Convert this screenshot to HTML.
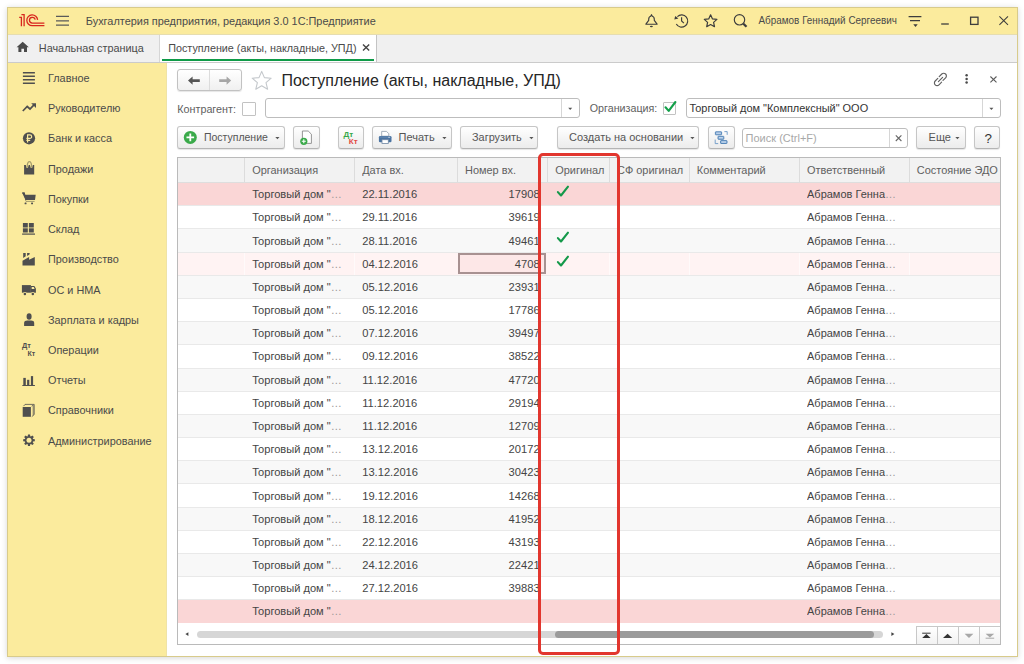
<!DOCTYPE html>
<html><head><meta charset="utf-8">
<style>
*{box-sizing:border-box;margin:0;padding:0}
html,body{width:1024px;height:664px;overflow:hidden;background:#fff;font-family:"Liberation Sans",sans-serif;color:#4d4d4d;position:relative}
.a{position:absolute}
.t{position:absolute;white-space:nowrap;line-height:1;transform-origin:left center}
</style></head><body>
<div class="a" style="left:7px;top:7px;width:1011px;height:650px;border:1px solid #d8cb8b;box-shadow:0 1px 6px rgba(0,0,0,.16);background:#fff"></div><div class="a" style="left:8px;top:8px;width:1009px;height:26px;background:#fbeb9d"></div><div class="a" style="left:8px;top:34px;width:1009px;height:29px;background:#f0f0f0;border-bottom:1px solid #cbcbcb"></div><div class="a" style="left:8px;top:34px;width:1009px;height:1px;background:#e6ddb0"></div><div class="a" style="left:8px;top:63px;width:158px;height:593px;background:#fbeb9d"></div><div class="a" style="left:166px;top:63px;width:1px;height:593px;background:#efe3a6"></div><svg class="a" style="left:15px;top:10px;" width="35" height="20" viewBox="15 10 35 20"><g fill="none" stroke="#d8261e" stroke-width="1.3" stroke-linecap="butt"><path d="M19.2 17.4H21.4V26.3M21.4 14.6H24.1V26.3"/><path d="M37.6 19.9A5.4 5.4 0 1 0 32.3 25.7H44.4"/><path d="M35.2 19.7A2.9 2.9 0 1 0 32.3 23.1H44.4"/></g></svg><svg class="a" style="left:54px;top:12px;" width="17" height="17" viewBox="54 12 17 17"><g stroke="#5a5a5a" stroke-width="1.3"><path d="M56 16.4H69M56 20.8H69M56 25.2H69"/></g></svg><div class="t" style="left:85.80px;top:16px;font-size:10.92px;color:#4a4a4a;transform:scale(1.0,1.06);transform-origin:0 9px;">Бухгалтерия предприятия, редакция 3.0 1С:Предприятие</div><svg class="a" style="left:642px;top:11px;" width="20" height="20" viewBox="642 11 20 20"><path d="M651.5 14.7L652.3 16.3C653.7 16.6 654.3 17.8 654.3 19.5V20.4L657.1 24.2H645.9L648.7 20.4V19.5C648.7 17.8 649.3 16.6 650.7 16.3z" fill="none" stroke="#3d3d3d" stroke-width="1.15" stroke-linejoin="round"/><ellipse cx="651.4" cy="26.5" rx="1.5" ry=".65" fill="#3d3d3d"/></svg><svg class="a" style="left:672px;top:11px;" width="20" height="20" viewBox="672 11 20 20"><g fill="none" stroke="#3d3d3d" stroke-width="1.15"><path d="M676.3 24A6.1 6.1 0 1 0 677.4 16.6"/><path d="M681.6 17.3V20.9L683.9 23.1"/></g><path d="M674.3 19.6L675.2 15.9L678.4 18.6z" fill="#3d3d3d"/></svg><svg class="a" style="left:702px;top:11px;" width="18" height="18" viewBox="702 11 18 18"><path fill="none" stroke="#3d3d3d" stroke-width="1.2" stroke-linejoin="round" d="M710.6 14.8l1.9 4.1 4.4.5-3.3 3 .9 4.3-3.9-2.2-3.9 2.2.9-4.3-3.3-3 4.4-.5z"/></svg><svg class="a" style="left:730px;top:11px;" width="20" height="20" viewBox="730 11 20 20"><circle cx="739.5" cy="19.8" r="5.2" fill="none" stroke="#3d3d3d" stroke-width="1.15"/><path d="M743.4 23.7L746.5 26.8" stroke="#3d3d3d" stroke-width="2.3"/></svg><div class="t" style="left:758.50px;top:16px;font-size:9.91px;color:#4a4a4a;transform:scale(1.0,1.02);transform-origin:0 8px;">Абрамов Геннадий Сергеевич</div><svg class="a" style="left:905px;top:12px;" width="20" height="18" viewBox="905 12 20 18"><g stroke="#3d3d3d" stroke-width="1.2"><path d="M908.6 16.6H921.4M910 20.6H920"/></g><path d="M913.3 24.3h4.4l-2.2 2.6z" fill="#3d3d3d"/></svg><svg class="a" style="left:938px;top:20px;" width="14" height="8" viewBox="938 20 14 8"><path d="M941.2 24H948.8" stroke="#3d3d3d" stroke-width="1.3"/></svg><svg class="a" style="left:966px;top:12px;" width="16" height="16" viewBox="966 12 16 16"><rect x="970.6" y="17.2" width="7.4" height="7.2" fill="none" stroke="#3d3d3d" stroke-width="1.3"/></svg><svg class="a" style="left:996px;top:13px;" width="16" height="15" viewBox="996 13 16 15"><path d="M999.4 16.4L1008 24.8M1008 16.4L999.4 24.8" stroke="#3d3d3d" stroke-width="1.05"/></svg><svg class="a" style="left:14px;top:39px;" width="18" height="16" viewBox="14 39 18 16"><path d="M22.7 41.8L16.6 47.2H18.4V52H21.4V48.8H24V52H27V47.2H28.8z" fill="#4a4a4a"/></svg><div class="t" style="left:38.80px;top:43px;font-size:10.86px;color:#4a4a4a;transform:scale(1.0,1.06);transform-origin:0 9px;">Начальная страница</div><div class="a" style="left:159px;top:35px;width:218px;height:27px;background:#fff;border-left:1px solid #d6d6d6;border-right:1px solid #c4c4c4"></div><div class="a" style="left:161.5px;top:59px;width:212.5px;height:1.6px;background:#0f9b48"></div><div class="t" style="left:168.20px;top:43px;font-size:10.79px;color:#4a4a4a;transform:scale(1.0,1.06);transform-origin:0 9px;">Поступление (акты, накладные, УПД)</div><svg class="a" style="left:360px;top:42px;" width="12" height="11" viewBox="360 42 12 11"><path d="M363 44.6L369.2 50.6M369.2 44.6L363 50.6" stroke="#444" stroke-width="1.4"/></svg><div class="t" style="left:48.00px;top:73px;font-size:10.87px;color:#4a4a4a;transform:scale(1.0,1.06);transform-origin:0 9px;">Главное</div><div class="t" style="left:48.00px;top:103px;font-size:10.87px;color:#4a4a4a;transform:scale(1.0,1.06);transform-origin:0 9px;">Руководителю</div><div class="t" style="left:48.00px;top:133px;font-size:10.87px;color:#4a4a4a;transform:scale(1.0,1.06);transform-origin:0 9px;">Банк и касса</div><div class="t" style="left:48.00px;top:164px;font-size:10.87px;color:#4a4a4a;transform:scale(1.0,1.06);transform-origin:0 9px;">Продажи</div><div class="t" style="left:48.00px;top:194px;font-size:10.87px;color:#4a4a4a;transform:scale(1.0,1.06);transform-origin:0 9px;">Покупки</div><div class="t" style="left:48.00px;top:224px;font-size:10.87px;color:#4a4a4a;transform:scale(1.0,1.06);transform-origin:0 9px;">Склад</div><div class="t" style="left:48.00px;top:254px;font-size:10.87px;color:#4a4a4a;transform:scale(1.0,1.06);transform-origin:0 9px;">Производство</div><div class="t" style="left:48.00px;top:285px;font-size:10.87px;color:#4a4a4a;transform:scale(1.0,1.06);transform-origin:0 9px;">ОС и НМА</div><div class="t" style="left:48.00px;top:315px;font-size:10.87px;color:#4a4a4a;transform:scale(1.0,1.06);transform-origin:0 9px;">Зарплата и кадры</div><div class="t" style="left:48.00px;top:345px;font-size:10.87px;color:#4a4a4a;transform:scale(1.0,1.06);transform-origin:0 9px;">Операции</div><div class="t" style="left:48.00px;top:375px;font-size:10.87px;color:#4a4a4a;transform:scale(1.0,1.06);transform-origin:0 9px;">Отчеты</div><div class="t" style="left:48.00px;top:405px;font-size:10.87px;color:#4a4a4a;transform:scale(1.0,1.06);transform-origin:0 9px;">Справочники</div><div class="t" style="left:48.00px;top:436px;font-size:10.87px;color:#4a4a4a;transform:scale(1.0,1.06);transform-origin:0 9px;">Администрирование</div><svg class="a" style="left:20px;top:70px;" width="18" height="16" viewBox="20 70 18 16"><g stroke="#4f4f4f" stroke-width="1.5"><path d="M22.9 72.7H34.9M22.9 76.2H34.9M22.9 79.7H34.9M22.9 83.2H34.9"/></g></svg><svg class="a" style="left:20px;top:100px;" width="18" height="14" viewBox="20 100 18 14"><path d="M22.8 111L27.2 106.5L30 109L34.2 104.6" fill="none" stroke="#4f4f4f" stroke-width="1.7"/><path d="M31.2 103.2H36V108z" fill="#4f4f4f"/></svg><svg class="a" style="left:21px;top:131px;" width="16" height="15" viewBox="21 131 16 15"><circle cx="29" cy="138.3" r="6.1" fill="#4f4f4f"/><g fill="none" stroke="#fbeb9d" stroke-width="1.2"><path d="M27.6 142.4V134.9H29.9A1.75 1.75 0 0 1 29.9 138.4H26.4M26.4 140.4H30.2"/></g></svg><svg class="a" style="left:22px;top:159px;" width="14" height="17" viewBox="22 159 14 17"><path d="M24.1 165.1H25.8L26.7 168H27.9L28.7 165.1H29.9L30.8 168H32.1L32.8 165.1H34.2V174.6H24.1z" fill="#4f4f4f"/><path d="M27.2 167.8C27.1 164.2 27.8 161.6 29.4 161.6S31.8 164.2 31.5 167.8" fill="none" stroke="#a49c6c" stroke-width="1.3"/></svg><svg class="a" style="left:20px;top:190px;" width="18" height="17" viewBox="20 190 18 17"><path d="M22.2 192.9H24.1L25.2 194.8H35.7L35 200H25.6z" fill="#4f4f4f"/><path d="M25.6 200.2L26 201.4H34.6" fill="none" stroke="#a49c6c" stroke-width="1"/><path d="M22.2 192.9H24.2L25.9 200" fill="none" stroke="#4f4f4f" stroke-width="1.1"/><rect x="24.6" y="202.4" width="1.9" height="1.9" rx=".5" fill="#4f4f4f"/><rect x="31.1" y="202.4" width="1.9" height="1.9" rx=".5" fill="#4f4f4f"/></svg><svg class="a" style="left:20px;top:221px;" width="18" height="16" viewBox="20 221 18 16"><g fill="#4f4f4f"><rect x="22.9" y="223" width="4.9" height="4.5"/><rect x="28.9" y="223" width="4.9" height="4.5"/><rect x="22.9" y="228.3" width="4.9" height="4.2"/><rect x="28.9" y="228.3" width="4.9" height="4.2"/><rect x="22.1" y="233.5" width="12.9" height="1.2"/></g></svg><svg class="a" style="left:20px;top:251px;" width="18" height="16" viewBox="20 251 18 16"><path d="M22.5 265.6V260.7L29.1 257V259.7L34.8 256.9V265.6z" fill="#4f4f4f"/><path d="M23.2 253H25.7V256.3L23.2 257.9z M27.1 253H29.7L29.5 254.4L27.1 255.9z" fill="#4f4f4f"/></svg><svg class="a" style="left:20px;top:282px;" width="18" height="14" viewBox="20 282 18 14"><path d="M21.9 285.1H30.9V292.7H21.9z" fill="#4f4f4f"/><path d="M30.9 286H34.3L35.9 288.6V292.7H30.9z" fill="#4f4f4f"/><path d="M31.7 286.9H33.8L34.6 289H31.7z" fill="#fbeb9d"/><circle cx="24.9" cy="293.8" r="1.9" fill="#fbeb9d"/><circle cx="32.8" cy="293.8" r="1.9" fill="#fbeb9d"/><circle cx="24.9" cy="293.9" r="1.25" fill="#4f4f4f"/><circle cx="32.8" cy="293.9" r="1.25" fill="#4f4f4f"/></svg><svg class="a" style="left:20px;top:311px;" width="18" height="16" viewBox="20 311 18 16"><ellipse cx="29.1" cy="316.5" rx="2.5" ry="3.2" fill="#4f4f4f"/><path d="M24.1 326V323C24.1 321.4 25.6 320.6 27.2 320.6H31.1C32.7 320.6 34.2 321.4 34.2 323V326z" fill="#4f4f4f"/></svg><div class="t" style="left:22px;top:342.2px;font-size:7.4px;font-weight:bold;color:#4f4f4f">Дт</div><div class="t" style="left:27.5px;top:350.3px;font-size:7px;font-weight:bold;color:#4f4f4f">Кт</div><svg class="a" style="left:20px;top:372px;" width="18" height="15" viewBox="20 372 18 15"><g fill="#4f4f4f"><rect x="23.3" y="377.9" width="2.5" height="7.4"/><rect x="27.1" y="379.8" width="2.2" height="5.5"/><rect x="30.9" y="376.1" width="2.2" height="9.2"/><rect x="22.3" y="385" width="12.6" height="1"/></g></svg><svg class="a" style="left:20px;top:402px;" width="18" height="16" viewBox="20 402 18 16"><path d="M22.7 407H30.9V416.8H22.7z" fill="#4f4f4f"/><path d="M23.6 406.1L25 404.4H34.2V414.6L31.8 416.6" fill="none" stroke="#4f4f4f" stroke-width=".8"/><path d="M31.6 406.2L33.2 405.2V415.2" fill="none" stroke="#4f4f4f" stroke-width=".7"/></svg><svg class="a" style="left:20px;top:431px;" width="18" height="19" viewBox="20 431 18 19"><path d="M34.81 439.30L34.81 441.30L32.99 441.62L32.75 442.18L33.82 443.71L32.41 445.12L30.88 444.05L30.32 444.29L30.00 446.11L28.00 446.11L27.68 444.29L27.12 444.05L25.59 445.12L24.18 443.71L25.25 442.18L25.01 441.62L23.19 441.30L23.19 439.30L25.01 438.98L25.25 438.42L24.18 436.89L25.59 435.48L27.12 436.55L27.68 436.31L28.00 434.49L30.00 434.49L30.32 436.31L30.88 436.55L32.41 435.48L33.82 436.89L32.75 438.42L32.99 438.98z" fill="#4f4f4f"/><circle cx="29" cy="440.3" r="2.5" fill="#fbeb9d"/></svg><div class="a" style="left:177.3px;top:69.3px;width:64.5px;height:21.4px;border:1px solid #c2c2c2;border-radius:3px;background:linear-gradient(#fff,#f0f0f0);box-shadow:0 1px 1px rgba(0,0,0,.10)"></div><div class="a" style="left:209.3px;top:70.3px;width:1px;height:19.4px;background:#dcdcdc"></div><svg class="a" style="left:185px;top:74px;" width="18" height="13" viewBox="185 74 18 13"><path d="M188 80.6L192.6 76.4V79.3H199.8V81.9H192.6V84.8z" fill="#555"/></svg><svg class="a" style="left:216px;top:74px;" width="18" height="13" viewBox="216 74 18 13"><path d="M231.2 80.6L226.6 76.4V79.3H219.2V81.9H226.6V84.8z" fill="#a6a6a6"/></svg><svg class="a" style="left:249px;top:68px;" width="26" height="24" viewBox="249 68 26 24"><path d="M261.7 71.4L264.4 77.6L271.2 78.2L266 82.6L267.6 89.2L261.7 85.7L255.8 89.2L257.4 82.6L252.2 78.2L259 77.6z" fill="none" stroke="#c4c8cc" stroke-width="1.1" stroke-linejoin="round"/></svg><div class="t" style="left:281.40px;top:73px;font-size:16px;color:#262626;transform:scale(1.0,1.08);transform-origin:0 13px;">Поступление (акты, накладные, УПД)</div><svg class="a" style="left:930px;top:70px;" width="20" height="19" viewBox="930 70 20 19"><g fill="none" stroke="#606060" stroke-width="1.15" stroke-linecap="round"><path d="M939.2 76.6L941.8 74A2.6 2.6 0 0 1 945.6 77.8L943 80.4"/><path d="M941.6 82.2L939 84.8A2.6 2.6 0 0 1 935.2 81L937.8 78.4"/><path d="M938.4 81.6L942.6 77.4"/></g></svg><svg class="a" style="left:963px;top:72px;" width="8" height="14" viewBox="963 72 8 14"><g fill="#4a4a4a"><circle cx="966.6" cy="75.3" r="1.25"/><circle cx="966.6" cy="79" r="1.25"/><circle cx="966.6" cy="82.6" r="1.25"/></g></svg><svg class="a" style="left:987px;top:73px;" width="13" height="13" viewBox="987 73 13 13"><path d="M990.4 76.5L996.5 82.4M996.5 76.5L990.4 82.4" stroke="#5a5a5a" stroke-width="1.05"/></svg><div class="t" style="left:177.30px;top:104px;font-size:10.76px;color:#606060;transform:scale(1.0,1.06);transform-origin:0 9px;">Контрагент:</div><div class="a" style="left:242px;top:102px;width:14px;height:14px;border:1px solid #c2c2c2;border-radius:1px;background:#fff"></div><div class="a" style="left:265px;top:98px;width:315px;height:20px;border:1px solid #bdbdbd;border-radius:3px;background:#fff"></div><div class="a" style="left:561px;top:99px;width:1px;height:18px;background:#d6d6d6"></div><svg class="a" style="left:566px;top:106px;" width="8" height="5" viewBox="566 106 8 5"><path d="M568.2 107.8H572.2L570.2 110z" fill="#555"/></svg><div class="t" style="left:589.80px;top:103px;font-size:10.71px;color:#606060;transform:scale(1.0,1.06);transform-origin:0 9px;">Организация:</div><div class="a" style="left:663px;top:102px;width:13px;height:13px;border:1px solid #c2c2c2;border-radius:1px;background:#fff"></div><svg class="a" style="left:662px;top:99px;" width="17" height="17" viewBox="662 99 17 17"><path d="M665.5 107.3L668.7 110.9L675.4 102" fill="none" stroke="#13a04a" stroke-width="2.1" stroke-linecap="round" stroke-linejoin="round"/></svg><div class="a" style="left:686px;top:98px;width:315px;height:20px;border:1px solid #bdbdbd;border-radius:3px;background:#fff"></div><div class="a" style="left:982px;top:99px;width:1px;height:18px;background:#d6d6d6"></div><svg class="a" style="left:988px;top:106px;" width="8" height="5" viewBox="988 106 8 5"><path d="M989.4 107.8H993.4L991.4 110z" fill="#555"/></svg><div class="t" style="left:689.40px;top:103px;font-size:10.95px;color:#333;transform:scale(1.0,1.06);transform-origin:0 9px;">Торговый дом "Комплексный" ООО</div><div class="a" style="left:177px;top:126px;width:108px;height:23px;border:1px solid #c6c6c6;border-bottom-color:#b4b4b4;border-radius:3px;background:linear-gradient(#ffffff,#f3f3f3 60%,#ececec);box-shadow:0 1px 1px rgba(0,0,0,.10)"></div><svg class="a" style="left:182px;top:129px;" width="17" height="17" viewBox="182 129 17 17"><circle cx="190.3" cy="137.4" r="6.5" fill="#3aaa4a"/><path d="M190.3 133.6V141.2M186.5 137.4H194.1" stroke="#fff" stroke-width="1.8"/></svg><div class="t" style="left:203.90px;top:132px;font-size:10.5px;color:#555;transform:scale(1.0,1.06);transform-origin:0 9px;">Поступление</div><svg class="a" style="left:274px;top:136px;" width="8" height="4" viewBox="274 136 8 4"><path d="M275.3 137.1H279.5L277.4 139.2z" fill="#555"/></svg><div class="a" style="left:293px;top:126px;width:27px;height:23px;border:1px solid #c6c6c6;border-bottom-color:#b4b4b4;border-radius:3px;background:linear-gradient(#ffffff,#f3f3f3 60%,#ececec);box-shadow:0 1px 1px rgba(0,0,0,.10)"></div><svg class="a" style="left:297px;top:128px;" width="18" height="19" viewBox="297 128 18 19"><path d="M302.4 131H308.2L311.4 134.2V143.4H302.4z" fill="#fff" stroke="#8a8a8a" stroke-width=".9"/><circle cx="303.8" cy="141.3" r="3.6" fill="#3aaa4a"/><path d="M303.8 139.3V143.3M301.8 141.3H305.8" stroke="#fff" stroke-width="1.1"/></svg><div class="a" style="left:338px;top:126px;width:26px;height:23px;border:1px solid #c6c6c6;border-bottom-color:#b4b4b4;border-radius:3px;background:linear-gradient(#ffffff,#f3f3f3 60%,#ececec);box-shadow:0 1px 1px rgba(0,0,0,.10)"></div><div class="t" style="left:343.6px;top:130.6px;font-size:8px;font-weight:bold;color:#36a84a">Дт</div><div class="t" style="left:348.8px;top:137.8px;font-size:8px;font-weight:bold;color:#e24a44">Кт</div><div class="a" style="left:372px;top:126px;width:80px;height:23px;border:1px solid #c6c6c6;border-bottom-color:#b4b4b4;border-radius:3px;background:linear-gradient(#ffffff,#f3f3f3 60%,#ececec);box-shadow:0 1px 1px rgba(0,0,0,.10)"></div><svg class="a" style="left:376px;top:129px;" width="18" height="17" viewBox="376 129 18 17"><path d="M381.7 131.4H386.5L388.8 133.7V136.2H381.7z" fill="#fff" stroke="#9aa6b4" stroke-width=".9"/><rect x="378.9" y="136" width="12.6" height="6.2" rx="1.3" fill="#4a73a1"/><path d="M379.6 137.1H390.8" stroke="#6f93ba" stroke-width=".8"/><path d="M388.2 137.3H390" stroke="#dfe7f0" stroke-width=".7"/><rect x="382" y="139.7" width="6.3" height="3.7" fill="#fff" stroke="#6f86a3" stroke-width=".8"/></svg><div class="t" style="left:398.60px;top:132px;font-size:11px;color:#555;transform:scale(1.0,1.06);transform-origin:0 9px;">Печать</div><svg class="a" style="left:440.6px;top:136px;" width="8" height="4" viewBox="440.6 136 8 4"><path d="M441.9 137.1H446.1L444.0 139.2z" fill="#555"/></svg><div class="a" style="left:460px;top:126px;width:78px;height:23px;border:1px solid #c6c6c6;border-bottom-color:#b4b4b4;border-radius:3px;background:linear-gradient(#ffffff,#f3f3f3 60%,#ececec);box-shadow:0 1px 1px rgba(0,0,0,.10)"></div><div class="t" style="left:472.00px;top:132px;font-size:10.91px;color:#555;transform:scale(1.0,1.06);transform-origin:0 9px;">Загрузить</div><svg class="a" style="left:527.6px;top:136px;" width="8" height="4" viewBox="527.6 136 8 4"><path d="M528.9 137.1H533.1L531.0 139.2z" fill="#555"/></svg><div class="a" style="left:557px;top:126px;width:142px;height:23px;border:1px solid #c6c6c6;border-bottom-color:#b4b4b4;border-radius:3px;background:linear-gradient(#ffffff,#f3f3f3 60%,#ececec);box-shadow:0 1px 1px rgba(0,0,0,.10)"></div><div class="t" style="left:569.10px;top:132px;font-size:11px;color:#555;transform:scale(1.0,1.06);transform-origin:0 9px;">Создать на основании</div><svg class="a" style="left:688.6px;top:136px;" width="8" height="4" viewBox="688.6 136 8 4"><path d="M689.9 137.1H694.1L692.0 139.2z" fill="#555"/></svg><div class="a" style="left:708px;top:126px;width:27px;height:23px;border:1px solid #c6c6c6;border-bottom-color:#b4b4b4;border-radius:3px;background:linear-gradient(#ffffff,#f3f3f3 60%,#ececec);box-shadow:0 1px 1px rgba(0,0,0,.10)"></div><svg class="a" style="left:712px;top:129px;" width="18" height="17" viewBox="712 129 18 17"><g fill="#9dbde0" stroke="#4b7eb3" stroke-width=".9"><rect x="715.4" y="131.8" width="6.2" height="3" rx=".4"/><rect x="718" y="136.3" width="5.8" height="3" rx=".4"/><rect x="720.6" y="140.6" width="6.4" height="2.9" rx=".4"/></g><path d="M716.4 133.2H720.6M719 137.7H722.8M721.6 142H726" stroke="#e8f0f8" stroke-width=".6"/><path d="M724.4 131.6H727.2V134.8M715.2 139.6V143.6H718.2" fill="none" stroke="#6b97c6" stroke-width=".9"/></svg><div class="a" style="left:742px;top:128px;width:166px;height:20px;border:1px solid #bdbdbd;border-radius:3px;background:#fff"></div><div class="a" style="left:889px;top:129px;width:1px;height:18px;background:#d6d6d6"></div><div class="t" style="left:745.60px;top:133px;font-size:11px;color:#a8a8a8;transform:scale(1.0,1.06);transform-origin:0 9px;">Поиск (Ctrl+F)</div><svg class="a" style="left:894px;top:134px;" width="10" height="9" viewBox="894 134 10 9"><path d="M895.8 135.4L901.4 141M901.4 135.4L895.8 141" stroke="#666" stroke-width="1.1"/></svg><div class="a" style="left:916px;top:126px;width:50px;height:23px;border:1px solid #c6c6c6;border-bottom-color:#b4b4b4;border-radius:3px;background:linear-gradient(#ffffff,#f3f3f3 60%,#ececec);box-shadow:0 1px 1px rgba(0,0,0,.10)"></div><div class="t" style="left:928.60px;top:132px;font-size:11px;color:#555;transform:scale(1.0,1.06);transform-origin:0 9px;">Еще</div><svg class="a" style="left:954.2px;top:136px;" width="8" height="4" viewBox="954.2 136 8 4"><path d="M955.5 137.1H959.7L957.6 139.2z" fill="#555"/></svg><div class="a" style="left:974px;top:126px;width:26px;height:23px;border:1px solid #c6c6c6;border-bottom-color:#b4b4b4;border-radius:3px;background:linear-gradient(#ffffff,#f3f3f3 60%,#ececec);box-shadow:0 1px 1px rgba(0,0,0,.10)"></div><div class="t" style="left:984.40px;top:132px;font-size:13.4px;color:#333;transform:scale(1.0,1.0);transform-origin:0 11px;">?</div><div class="a" style="left:177px;top:157px;width:824px;height:488px;border:1px solid #bababa;background:#fff"></div><div class="a" style="left:178px;top:158px;width:822px;height:24px;background:#f2f2f2"></div><div class="a" style="left:178px;top:182px;width:822px;height:1px;background:#dedede"></div><div class="a" style="left:244px;top:158px;width:1px;height:24px;background:#dcdcdc"></div><div class="a" style="left:354px;top:158px;width:1px;height:24px;background:#dcdcdc"></div><div class="a" style="left:457px;top:158px;width:1px;height:24px;background:#dcdcdc"></div><div class="a" style="left:547px;top:158px;width:1px;height:24px;background:#dcdcdc"></div><div class="a" style="left:609px;top:158px;width:1px;height:24px;background:#dcdcdc"></div><div class="a" style="left:689px;top:158px;width:1px;height:24px;background:#dcdcdc"></div><div class="a" style="left:799px;top:158px;width:1px;height:24px;background:#dcdcdc"></div><div class="a" style="left:909px;top:158px;width:1px;height:24px;background:#dcdcdc"></div><div class="t" style="left:252.20px;top:165px;font-size:10.95px;color:#606060;transform:scale(1.0,1.06);transform-origin:0 9px;">Организация</div><div class="t" style="left:362.20px;top:165px;font-size:10.95px;color:#606060;transform:scale(1.0,1.06);transform-origin:0 9px;">Дата вх.</div><div class="t" style="left:465.00px;top:165px;font-size:10.95px;color:#606060;transform:scale(1.0,1.06);transform-origin:0 9px;">Номер вх.</div><div class="t" style="left:555.20px;top:165px;font-size:10.95px;color:#606060;transform:scale(1.0,1.06);transform-origin:0 9px;">Оригинал</div><div class="t" style="left:617.00px;top:165px;font-size:10.95px;color:#606060;transform:scale(1.0,1.06);transform-origin:0 9px;">СФ оригинал</div><div class="t" style="left:696.80px;top:165px;font-size:10.95px;color:#606060;transform:scale(1.0,1.06);transform-origin:0 9px;">Комментарий</div><div class="t" style="left:807.00px;top:165px;font-size:10.95px;color:#606060;transform:scale(1.0,1.06);transform-origin:0 9px;">Ответственный</div><div class="t" style="left:916.80px;top:165px;font-size:10.95px;color:#606060;transform:scale(1.0,1.06);transform-origin:0 9px;">Состояние ЭДО</div><div class="a" style="left:178px;top:183.1px;width:822px;height:22.18px;background:#fad6d6"></div><div class="a" style="left:178px;top:205.28px;width:822px;height:1px;background:#e9e9e9"></div><div class="t" style="left:252.20px;top:189px;font-size:11.09px;color:#444;transform:scale(1.0,1.06);transform-origin:0 9px;">Торговый дом "<span style="color:#9a9a9a">…</span></div><div class="t" style="left:362.20px;top:189px;font-size:11.16px;color:#444;transform:scale(1.0,1.06);transform-origin:0 9px;">22.11.2016</div><div class="t" style="right:484.40px;top:189px;font-size:11.16px;color:#444;transform:scale(1.0,1.06);transform-origin:100% 9px;">17908</div><svg class="a" style="left:555px;top:184.1px;" width="16" height="14" viewBox="555 184.1 16 14"><path d="M557.9 192.20L561 195.60L568 186.80" fill="none" stroke="#14994a" stroke-width="2.1" stroke-linecap="round" stroke-linejoin="round"/></svg><div class="t" style="left:807.00px;top:189px;font-size:11.0px;color:#444;transform:scale(1.0,1.06);transform-origin:0 9px;">Абрамов Генна<span style="color:#9a9a9a">…</span></div><div class="a" style="left:178px;top:206.28px;width:822px;height:22.18px;background:#ffffff"></div><div class="a" style="left:178px;top:228.46px;width:822px;height:1px;background:#e9e9e9"></div><div class="t" style="left:252.20px;top:212px;font-size:11.09px;color:#444;transform:scale(1.0,1.06);transform-origin:0 9px;">Торговый дом "<span style="color:#9a9a9a">…</span></div><div class="t" style="left:362.20px;top:212px;font-size:11.16px;color:#444;transform:scale(1.0,1.06);transform-origin:0 9px;">29.11.2016</div><div class="t" style="right:484.40px;top:212px;font-size:11.16px;color:#444;transform:scale(1.0,1.06);transform-origin:100% 9px;">39619</div><div class="t" style="left:807.00px;top:212px;font-size:11.0px;color:#444;transform:scale(1.0,1.06);transform-origin:0 9px;">Абрамов Генна<span style="color:#9a9a9a">…</span></div><div class="a" style="left:178px;top:229.46px;width:822px;height:22.18px;background:#f8f8f8"></div><div class="a" style="left:178px;top:251.64px;width:822px;height:1px;background:#e9e9e9"></div><div class="t" style="left:252.20px;top:236px;font-size:11.09px;color:#444;transform:scale(1.0,1.06);transform-origin:0 9px;">Торговый дом "<span style="color:#9a9a9a">…</span></div><div class="t" style="left:362.20px;top:236px;font-size:11.16px;color:#444;transform:scale(1.0,1.06);transform-origin:0 9px;">28.11.2016</div><div class="t" style="right:484.40px;top:236px;font-size:11.16px;color:#444;transform:scale(1.0,1.06);transform-origin:100% 9px;">49461</div><svg class="a" style="left:555px;top:230.45999999999998px;" width="16" height="14" viewBox="555 230.45999999999998 16 14"><path d="M557.9 238.56L561 241.96L568 233.16" fill="none" stroke="#14994a" stroke-width="2.1" stroke-linecap="round" stroke-linejoin="round"/></svg><div class="t" style="left:807.00px;top:236px;font-size:11.0px;color:#444;transform:scale(1.0,1.06);transform-origin:0 9px;">Абрамов Генна<span style="color:#9a9a9a">…</span></div><div class="a" style="left:178px;top:252.64px;width:822px;height:22.18px;background:#fff3f3"></div><div class="a" style="left:178px;top:274.82px;width:822px;height:1px;background:#e9e9e9"></div><div class="t" style="left:252.20px;top:259px;font-size:11.09px;color:#444;transform:scale(1.0,1.06);transform-origin:0 9px;">Торговый дом "<span style="color:#9a9a9a">…</span></div><div class="t" style="left:362.20px;top:259px;font-size:11.16px;color:#444;transform:scale(1.0,1.06);transform-origin:0 9px;">04.12.2016</div><div class="a" style="left:244px;top:252.64px;width:1px;height:22.18px;background:#fffafa"></div><div class="a" style="left:354px;top:252.64px;width:1px;height:22.18px;background:#fffafa"></div><div class="a" style="left:609px;top:252.64px;width:1px;height:22.18px;background:#fffafa"></div><div class="a" style="left:689px;top:252.64px;width:1px;height:22.18px;background:#fffafa"></div><div class="a" style="left:799px;top:252.64px;width:1px;height:22.18px;background:#fffafa"></div><div class="a" style="left:909px;top:252.64px;width:1px;height:22.18px;background:#fffafa"></div><div class="a" style="left:457.7px;top:253.24px;width:88.8px;height:20.8px;border:2px solid #a89191;background:#fde7e7"></div><div class="t" style="right:484.40px;top:259px;font-size:11.16px;color:#444;transform:scale(1.0,1.06);transform-origin:100% 9px;">4708</div><svg class="a" style="left:555px;top:253.64px;" width="16" height="14" viewBox="555 253.64 16 14"><path d="M557.9 261.74L561 265.14L568 256.34" fill="none" stroke="#14994a" stroke-width="2.1" stroke-linecap="round" stroke-linejoin="round"/></svg><div class="t" style="left:807.00px;top:259px;font-size:11.0px;color:#444;transform:scale(1.0,1.06);transform-origin:0 9px;">Абрамов Генна<span style="color:#9a9a9a">…</span></div><div class="a" style="left:178px;top:275.82px;width:822px;height:22.18px;background:#f8f8f8"></div><div class="a" style="left:178px;top:298.0px;width:822px;height:1px;background:#e9e9e9"></div><div class="t" style="left:252.20px;top:282px;font-size:11.09px;color:#444;transform:scale(1.0,1.06);transform-origin:0 9px;">Торговый дом "<span style="color:#9a9a9a">…</span></div><div class="t" style="left:362.20px;top:282px;font-size:11.16px;color:#444;transform:scale(1.0,1.06);transform-origin:0 9px;">05.12.2016</div><div class="t" style="right:484.40px;top:282px;font-size:11.16px;color:#444;transform:scale(1.0,1.06);transform-origin:100% 9px;">23931</div><div class="t" style="left:807.00px;top:282px;font-size:11.0px;color:#444;transform:scale(1.0,1.06);transform-origin:0 9px;">Абрамов Генна<span style="color:#9a9a9a">…</span></div><div class="a" style="left:178px;top:299.0px;width:822px;height:22.18px;background:#ffffff"></div><div class="a" style="left:178px;top:321.18px;width:822px;height:1px;background:#e9e9e9"></div><div class="t" style="left:252.20px;top:305px;font-size:11.09px;color:#444;transform:scale(1.0,1.06);transform-origin:0 9px;">Торговый дом "<span style="color:#9a9a9a">…</span></div><div class="t" style="left:362.20px;top:305px;font-size:11.16px;color:#444;transform:scale(1.0,1.06);transform-origin:0 9px;">05.12.2016</div><div class="t" style="right:484.40px;top:305px;font-size:11.16px;color:#444;transform:scale(1.0,1.06);transform-origin:100% 9px;">17786</div><div class="t" style="left:807.00px;top:305px;font-size:11.0px;color:#444;transform:scale(1.0,1.06);transform-origin:0 9px;">Абрамов Генна<span style="color:#9a9a9a">…</span></div><div class="a" style="left:178px;top:322.18px;width:822px;height:22.18px;background:#f8f8f8"></div><div class="a" style="left:178px;top:344.36px;width:822px;height:1px;background:#e9e9e9"></div><div class="t" style="left:252.20px;top:328px;font-size:11.09px;color:#444;transform:scale(1.0,1.06);transform-origin:0 9px;">Торговый дом "<span style="color:#9a9a9a">…</span></div><div class="t" style="left:362.20px;top:328px;font-size:11.16px;color:#444;transform:scale(1.0,1.06);transform-origin:0 9px;">07.12.2016</div><div class="t" style="right:484.40px;top:328px;font-size:11.16px;color:#444;transform:scale(1.0,1.06);transform-origin:100% 9px;">39497</div><div class="t" style="left:807.00px;top:328px;font-size:11.0px;color:#444;transform:scale(1.0,1.06);transform-origin:0 9px;">Абрамов Генна<span style="color:#9a9a9a">…</span></div><div class="a" style="left:178px;top:345.36px;width:822px;height:22.18px;background:#ffffff"></div><div class="a" style="left:178px;top:367.54px;width:822px;height:1px;background:#e9e9e9"></div><div class="t" style="left:252.20px;top:351px;font-size:11.09px;color:#444;transform:scale(1.0,1.06);transform-origin:0 9px;">Торговый дом "<span style="color:#9a9a9a">…</span></div><div class="t" style="left:362.20px;top:351px;font-size:11.16px;color:#444;transform:scale(1.0,1.06);transform-origin:0 9px;">09.12.2016</div><div class="t" style="right:484.40px;top:351px;font-size:11.16px;color:#444;transform:scale(1.0,1.06);transform-origin:100% 9px;">38522</div><div class="t" style="left:807.00px;top:351px;font-size:11.0px;color:#444;transform:scale(1.0,1.06);transform-origin:0 9px;">Абрамов Генна<span style="color:#9a9a9a">…</span></div><div class="a" style="left:178px;top:368.54px;width:822px;height:22.18px;background:#f8f8f8"></div><div class="a" style="left:178px;top:390.72px;width:822px;height:1px;background:#e9e9e9"></div><div class="t" style="left:252.20px;top:375px;font-size:11.09px;color:#444;transform:scale(1.0,1.06);transform-origin:0 9px;">Торговый дом "<span style="color:#9a9a9a">…</span></div><div class="t" style="left:362.20px;top:375px;font-size:11.16px;color:#444;transform:scale(1.0,1.06);transform-origin:0 9px;">11.12.2016</div><div class="t" style="right:484.40px;top:375px;font-size:11.16px;color:#444;transform:scale(1.0,1.06);transform-origin:100% 9px;">47720</div><div class="t" style="left:807.00px;top:375px;font-size:11.0px;color:#444;transform:scale(1.0,1.06);transform-origin:0 9px;">Абрамов Генна<span style="color:#9a9a9a">…</span></div><div class="a" style="left:178px;top:391.72px;width:822px;height:22.18px;background:#ffffff"></div><div class="a" style="left:178px;top:413.9px;width:822px;height:1px;background:#e9e9e9"></div><div class="t" style="left:252.20px;top:398px;font-size:11.09px;color:#444;transform:scale(1.0,1.06);transform-origin:0 9px;">Торговый дом "<span style="color:#9a9a9a">…</span></div><div class="t" style="left:362.20px;top:398px;font-size:11.16px;color:#444;transform:scale(1.0,1.06);transform-origin:0 9px;">11.12.2016</div><div class="t" style="right:484.40px;top:398px;font-size:11.16px;color:#444;transform:scale(1.0,1.06);transform-origin:100% 9px;">29194</div><div class="t" style="left:807.00px;top:398px;font-size:11.0px;color:#444;transform:scale(1.0,1.06);transform-origin:0 9px;">Абрамов Генна<span style="color:#9a9a9a">…</span></div><div class="a" style="left:178px;top:414.9px;width:822px;height:22.18px;background:#f8f8f8"></div><div class="a" style="left:178px;top:437.08px;width:822px;height:1px;background:#e9e9e9"></div><div class="t" style="left:252.20px;top:421px;font-size:11.09px;color:#444;transform:scale(1.0,1.06);transform-origin:0 9px;">Торговый дом "<span style="color:#9a9a9a">…</span></div><div class="t" style="left:362.20px;top:421px;font-size:11.16px;color:#444;transform:scale(1.0,1.06);transform-origin:0 9px;">11.12.2016</div><div class="t" style="right:484.40px;top:421px;font-size:11.16px;color:#444;transform:scale(1.0,1.06);transform-origin:100% 9px;">12709</div><div class="t" style="left:807.00px;top:421px;font-size:11.0px;color:#444;transform:scale(1.0,1.06);transform-origin:0 9px;">Абрамов Генна<span style="color:#9a9a9a">…</span></div><div class="a" style="left:178px;top:438.08px;width:822px;height:22.18px;background:#ffffff"></div><div class="a" style="left:178px;top:460.26px;width:822px;height:1px;background:#e9e9e9"></div><div class="t" style="left:252.20px;top:444px;font-size:11.09px;color:#444;transform:scale(1.0,1.06);transform-origin:0 9px;">Торговый дом "<span style="color:#9a9a9a">…</span></div><div class="t" style="left:362.20px;top:444px;font-size:11.16px;color:#444;transform:scale(1.0,1.06);transform-origin:0 9px;">13.12.2016</div><div class="t" style="right:484.40px;top:444px;font-size:11.16px;color:#444;transform:scale(1.0,1.06);transform-origin:100% 9px;">20172</div><div class="t" style="left:807.00px;top:444px;font-size:11.0px;color:#444;transform:scale(1.0,1.06);transform-origin:0 9px;">Абрамов Генна<span style="color:#9a9a9a">…</span></div><div class="a" style="left:178px;top:461.26px;width:822px;height:22.18px;background:#f8f8f8"></div><div class="a" style="left:178px;top:483.44px;width:822px;height:1px;background:#e9e9e9"></div><div class="t" style="left:252.20px;top:467px;font-size:11.09px;color:#444;transform:scale(1.0,1.06);transform-origin:0 9px;">Торговый дом "<span style="color:#9a9a9a">…</span></div><div class="t" style="left:362.20px;top:467px;font-size:11.16px;color:#444;transform:scale(1.0,1.06);transform-origin:0 9px;">13.12.2016</div><div class="t" style="right:484.40px;top:467px;font-size:11.16px;color:#444;transform:scale(1.0,1.06);transform-origin:100% 9px;">30423</div><div class="t" style="left:807.00px;top:467px;font-size:11.0px;color:#444;transform:scale(1.0,1.06);transform-origin:0 9px;">Абрамов Генна<span style="color:#9a9a9a">…</span></div><div class="a" style="left:178px;top:484.44px;width:822px;height:22.18px;background:#ffffff"></div><div class="a" style="left:178px;top:506.62px;width:822px;height:1px;background:#e9e9e9"></div><div class="t" style="left:252.20px;top:491px;font-size:11.09px;color:#444;transform:scale(1.0,1.06);transform-origin:0 9px;">Торговый дом "<span style="color:#9a9a9a">…</span></div><div class="t" style="left:362.20px;top:491px;font-size:11.16px;color:#444;transform:scale(1.0,1.06);transform-origin:0 9px;">19.12.2016</div><div class="t" style="right:484.40px;top:491px;font-size:11.16px;color:#444;transform:scale(1.0,1.06);transform-origin:100% 9px;">14268</div><div class="t" style="left:807.00px;top:491px;font-size:11.0px;color:#444;transform:scale(1.0,1.06);transform-origin:0 9px;">Абрамов Генна<span style="color:#9a9a9a">…</span></div><div class="a" style="left:178px;top:507.62px;width:822px;height:22.18px;background:#f8f8f8"></div><div class="a" style="left:178px;top:529.8px;width:822px;height:1px;background:#e9e9e9"></div><div class="t" style="left:252.20px;top:514px;font-size:11.09px;color:#444;transform:scale(1.0,1.06);transform-origin:0 9px;">Торговый дом "<span style="color:#9a9a9a">…</span></div><div class="t" style="left:362.20px;top:514px;font-size:11.16px;color:#444;transform:scale(1.0,1.06);transform-origin:0 9px;">18.12.2016</div><div class="t" style="right:484.40px;top:514px;font-size:11.16px;color:#444;transform:scale(1.0,1.06);transform-origin:100% 9px;">41952</div><div class="t" style="left:807.00px;top:514px;font-size:11.0px;color:#444;transform:scale(1.0,1.06);transform-origin:0 9px;">Абрамов Генна<span style="color:#9a9a9a">…</span></div><div class="a" style="left:178px;top:530.8px;width:822px;height:22.18px;background:#ffffff"></div><div class="a" style="left:178px;top:552.98px;width:822px;height:1px;background:#e9e9e9"></div><div class="t" style="left:252.20px;top:537px;font-size:11.09px;color:#444;transform:scale(1.0,1.06);transform-origin:0 9px;">Торговый дом "<span style="color:#9a9a9a">…</span></div><div class="t" style="left:362.20px;top:537px;font-size:11.16px;color:#444;transform:scale(1.0,1.06);transform-origin:0 9px;">22.12.2016</div><div class="t" style="right:484.40px;top:537px;font-size:11.16px;color:#444;transform:scale(1.0,1.06);transform-origin:100% 9px;">43193</div><div class="t" style="left:807.00px;top:537px;font-size:11.0px;color:#444;transform:scale(1.0,1.06);transform-origin:0 9px;">Абрамов Генна<span style="color:#9a9a9a">…</span></div><div class="a" style="left:178px;top:553.98px;width:822px;height:22.18px;background:#f8f8f8"></div><div class="a" style="left:178px;top:576.16px;width:822px;height:1px;background:#e9e9e9"></div><div class="t" style="left:252.20px;top:560px;font-size:11.09px;color:#444;transform:scale(1.0,1.06);transform-origin:0 9px;">Торговый дом "<span style="color:#9a9a9a">…</span></div><div class="t" style="left:362.20px;top:560px;font-size:11.16px;color:#444;transform:scale(1.0,1.06);transform-origin:0 9px;">24.12.2016</div><div class="t" style="right:484.40px;top:560px;font-size:11.16px;color:#444;transform:scale(1.0,1.06);transform-origin:100% 9px;">22421</div><div class="t" style="left:807.00px;top:560px;font-size:11.0px;color:#444;transform:scale(1.0,1.06);transform-origin:0 9px;">Абрамов Генна<span style="color:#9a9a9a">…</span></div><div class="a" style="left:178px;top:577.16px;width:822px;height:22.18px;background:#ffffff"></div><div class="a" style="left:178px;top:599.34px;width:822px;height:1px;background:#e9e9e9"></div><div class="t" style="left:252.20px;top:583px;font-size:11.09px;color:#444;transform:scale(1.0,1.06);transform-origin:0 9px;">Торговый дом "<span style="color:#9a9a9a">…</span></div><div class="t" style="left:362.20px;top:583px;font-size:11.16px;color:#444;transform:scale(1.0,1.06);transform-origin:0 9px;">27.12.2016</div><div class="t" style="right:484.40px;top:583px;font-size:11.16px;color:#444;transform:scale(1.0,1.06);transform-origin:100% 9px;">39883</div><div class="t" style="left:807.00px;top:583px;font-size:11.0px;color:#444;transform:scale(1.0,1.06);transform-origin:0 9px;">Абрамов Генна<span style="color:#9a9a9a">…</span></div><div class="a" style="left:178px;top:600.34px;width:822px;height:22.18px;background:#fad6d6"></div><div class="t" style="left:252.20px;top:606px;font-size:11.09px;color:#444;transform:scale(1.0,1.06);transform-origin:0 9px;">Торговый дом "<span style="color:#9a9a9a">…</span></div><div class="t" style="left:807.00px;top:606px;font-size:11.0px;color:#444;transform:scale(1.0,1.06);transform-origin:0 9px;">Абрамов Генна<span style="color:#9a9a9a">…</span></div><svg class="a" style="left:184px;top:630px;" width="8" height="8" viewBox="184 630 8 8"><path d="M185.4 634.1L188.4 632.2V636z" fill="#444"/></svg><div class="a" style="left:197px;top:631px;width:686px;height:7px;background:#d6d6d6;border-radius:4px"></div><div class="a" style="left:554.8px;top:631px;width:319.2px;height:7px;background:#9b9b9b;border-radius:4px"></div><svg class="a" style="left:889px;top:630px;" width="8" height="8" viewBox="889 630 8 8"><path d="M894.4 634.1L891.4 632.2V636z" fill="#444"/></svg><div class="a" style="left:916.4px;top:626.3px;width:84px;height:18.2px;border-left:1px solid #c8c8c8;border-top:1px solid #c8c8c8;background:linear-gradient(#fff,#f2f2f2)"></div><div class="a" style="left:937px;top:626.3px;width:1px;height:18.2px;background:#c8c8c8"></div><div class="a" style="left:958px;top:626.3px;width:1px;height:18.2px;background:#c8c8c8"></div><div class="a" style="left:979px;top:626.3px;width:1px;height:18.2px;background:#c8c8c8"></div><svg class="a" style="left:920px;top:629px;" width="16" height="13" viewBox="920 629 16 13"><path d="M922.2 633.2H930.6" stroke="#333" stroke-width="1"/><path d="M922.2 638.1L926.4 634.1L930.6 638.1z" fill="#333"/></svg><svg class="a" style="left:941px;top:629px;" width="16" height="13" viewBox="941 629 16 13"><path d="M943 638.1L947.6 633.7L952.2 638.1z" fill="#333"/></svg><svg class="a" style="left:962px;top:629px;" width="16" height="13" viewBox="962 629 16 13"><path d="M964.6 633.8L969 638L973.4 633.8z" fill="#a8a8a8"/></svg><svg class="a" style="left:983px;top:629px;" width="16" height="13" viewBox="983 629 16 13"><path d="M985.6 633.8L989.9 637.4L994.2 633.8z" fill="#a8a8a8"/><path d="M985.6 638.2H994.2" stroke="#a8a8a8" stroke-width="1"/></svg><div class="a" style="left:538.4px;top:153.4px;width:81.8px;height:501.2px;border:3.3px solid #e2362e;border-radius:5px"></div></body></html>
